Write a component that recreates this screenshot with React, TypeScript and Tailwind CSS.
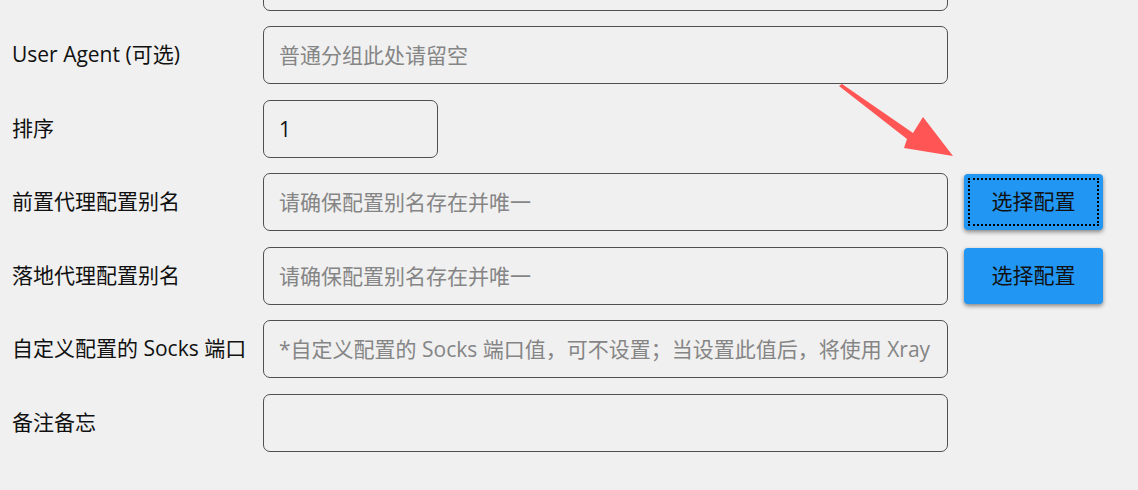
const rows = [
  { label: "", placeholder: "", value: "", wide: true, button: false },
  { label: "User Agent (可选)", placeholder: "普通分组此处请留空", value: "", wide: true, button: false },
  { label: "排序", placeholder: "", value: "1", wide: false, button: false },
  { label: "前置代理配置别名", placeholder: "请确保配置别名存在并唯一", value: "", wide: true, button: true, focused: true },
  { label: "落地代理配置别名", placeholder: "请确保配置别名存在并唯一", value: "", wide: true, button: true },
  {
    label: "自定义配置的 Socks 端口",
    placeholder: "*自定义配置的 Socks 端口值，可不设置；当设置此值后，将使用 Xray 内核",
    value: "",
    wide: true,
    button: false,
  },
  { label: "备注备忘", placeholder: "", value: "", wide: true, button: false },
];

const App = () => {
  return (
    <div
      className="relative h-[490px] w-full overflow-hidden bg-[#f0f0f0] text-[#111]"
      style={{ fontFamily: '"Open Sans", "Noto Sans CJK SC", sans-serif' }}
    >
      <div className="mt-[-47.5px] flex flex-col gap-[15.5px]">
        {rows.map((row, i) => (
          <div key={i} className="flex items-center">
            <label className="w-[263px] shrink-0 whitespace-nowrap pl-3 text-[21px]">{row.label}</label>
            <input
              readOnly
              defaultValue={row.value}
              placeholder={row.placeholder}
              className={`${row.wide ? "w-[685px]" : "w-[175px]"} h-[58px] shrink-0 rounded-[7px] border-[1.5px] border-[#505050] bg-transparent px-[15px] text-[21px] text-[#111] outline-none placeholder:text-[#858585]`}
            />
            {row.button && (
              <button
                className={`ml-4 h-[56px] w-[139px] rounded-[4px] bg-[#2196f3] text-[21px] text-[#111] shadow-[0_2px_4px_rgba(0,0,0,0.45)] ${
                  row.focused ? "outline-2 outline-offset-[-6px] outline-dotted outline-black" : ""
                }`}
              >
                选择配置
              </button>
            )}
          </div>
        ))}
      </div>

      {/* annotation arrow */}
      <svg className="pointer-events-none absolute left-0 top-0" width="1138" height="490">
        <polygon
          points="839,86 842,84 913,133 923,117 953,156 904,148 907,139"
          fill="#ff5555"
        />
      </svg>
    </div>
  );
};

export default App;
